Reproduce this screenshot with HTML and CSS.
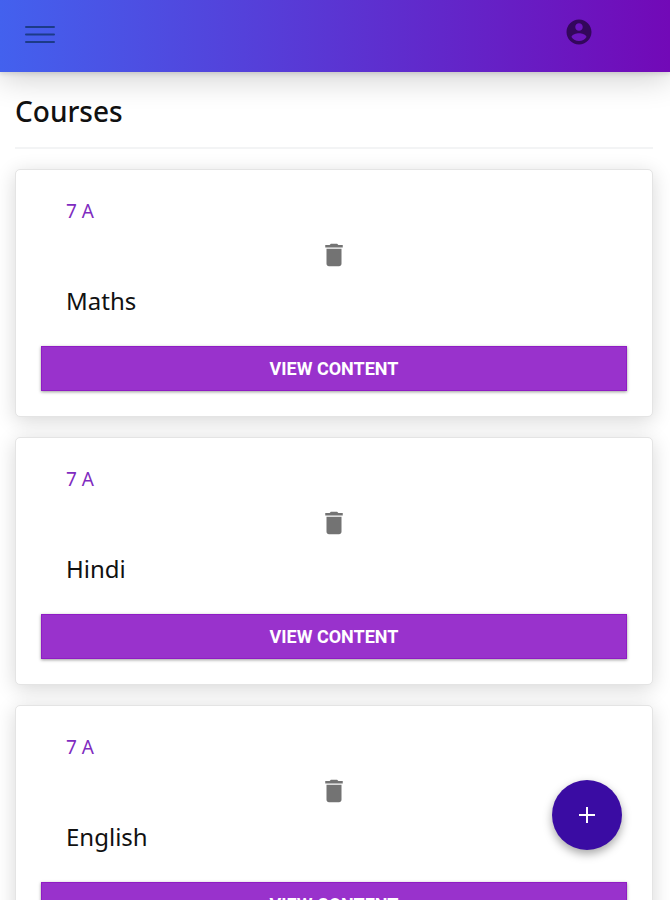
FILE: index.html
```html
<!DOCTYPE html>
<html lang="en">
<head>
  <meta charset="UTF-8" />
  <meta name="viewport" content="width=device-width, initial-scale=1.0"/>
  <title>Courses</title>
  <link rel="stylesheet" href="styles.css">
</head>
<body>
  <header class="topbar">
    <button type="button" class="icon-btn" aria-label="Open menu">
      <svg class="menu-icon" viewBox="0 0 30 18"><path d="M1 2h28M1 9.500h28M1 17h28"/></svg>
    </button>
    <button type="button" class="icon-btn" aria-label="Account">
      <svg class="icon" viewBox="0 0 24 24"><path d="M12 2C6.480 2 2 6.480 2 12s4.480 10 10 10 10-4.480 10-10S17.520 2 12 2zm0 3c1.660 0 3 1.340 3 3s-1.340 3-3 3-3-1.340-3-3 1.340-3 3-3zm0 14.200c-2.500 0-4.710-1.280-6-3.220.030-1.990 4-3.080 6-3.080 1.990 0 5.970 1.090 6 3.080-1.290 1.940-3.500 3.220-6 3.220z"/></svg>
    </button>
  </header>

  <main class="content">
    <h1>Courses</h1>
    <hr>

    <section class="card">
      <div class="card-body">
        <p class="batch">7 A</p>
        <button type="button" class="icon-btn delete" aria-label="Delete Maths">
          <svg class="icon" viewBox="0 0 24 24"><path d="M6 19c0 1.100.900 2 2 2h8c1.100 0 2-.900 2-2V7H6v12zM19 4h-3.500l-1-1h-5l-1 1H5v2h14V4z"/></svg>
        </button>
        <h2>Maths</h2>
      </div>
      <button type="button" class="view-btn">VIEW CONTENT</button>
    </section>

    <section class="card">
      <div class="card-body">
        <p class="batch">7 A</p>
        <button type="button" class="icon-btn delete" aria-label="Delete Hindi">
          <svg class="icon" viewBox="0 0 24 24"><path d="M6 19c0 1.100.900 2 2 2h8c1.100 0 2-.900 2-2V7H6v12zM19 4h-3.500l-1-1h-5l-1 1H5v2h14V4z"/></svg>
        </button>
        <h2>Hindi</h2>
      </div>
      <button type="button" class="view-btn">VIEW CONTENT</button>
    </section>

    <section class="card">
      <div class="card-body">
        <p class="batch">7 A</p>
        <button type="button" class="icon-btn delete" aria-label="Delete English">
          <svg class="icon" viewBox="0 0 24 24"><path d="M6 19c0 1.100.900 2 2 2h8c1.100 0 2-.900 2-2V7H6v12zM19 4h-3.500l-1-1h-5l-1 1H5v2h14V4z"/></svg>
        </button>
        <h2>English</h2>
      </div>
      <button type="button" class="view-btn">VIEW CONTENT</button>
    </section>
  </main>

  <button type="button" class="fab" aria-label="Add course">
    <svg viewBox="0 0 16 16"><path d="M8 0v16M0 8h16"/></svg>
  </button>
</body>
</html>
```

FILE: styles.css
```css
* {
  box-sizing: border-box;
}

body {
  margin: 0;
  background: white;
  color: #111;
  font-family: "Noto Sans", sans-serif;
}

.topbar {
  position: relative;
  display: flex;
  justify-content: space-between;
  align-items: flex-start;
  height: 72px;
  padding: 17px 76px 0 25px;
  background: linear-gradient(to right, #4361ee, #7209b7);
  box-shadow: 0 2px 4px rgba(0,0,0,0.1), 0 6px 32px rgba(0,0,0,0.2);
}

.icon-btn {
  display: block;
  padding: 0;
  background: none;
  border: none;
  cursor: pointer;
}

.icon {
  display: block;
  width: 30px;
  height: 30px;
  fill: currentColor;
}

.topbar .icon-btn {
  color: #33075c;
}

.menu-icon {
  display: block;
  width: 30px;
  height: 18px;
  margin-top: 8px;
  fill: none;
  stroke: #1c3b88;
  stroke-width: 2;
  stroke-linecap: round;
}

.content {
  padding: 20px 17px 20px 15px;
}

h1 {
  margin: 0;
  font-size: 28px;
  font-weight: 500;
  line-height: 38px;
}

hr {
  height: 2px;
  margin: 17px 0 20px;
  background: #f3f4f5;
  border: none;
}

.card {
  margin-bottom: 20px;
  padding: 25px;
  background: white;
  border: 1px solid #e4e4e4;
  border-radius: 5px;
  box-shadow: 0 4px 20px rgba(0,0,0,0.16);
}

.card-body {
  padding: 0 25px 29px;
}

.batch {
  margin: 0;
  color: #7f2cc0;
  font-size: 19px;
  font-weight: 400;
  line-height: 32px;
}

.delete {
  margin: 13px auto 15px;
  color: #737373;
}

h2 {
  margin: 0;
  font-size: 24px;
  font-weight: 400;
  line-height: 32px;
}

.view-btn {
  display: block;
  width: 100%;
  height: 45px;
  background: #9932cc;
  color: white;
  border: 1px solid #8f1cc4;
  font-family: Roboto, sans-serif;
  font-size: 18px;
  font-weight: 700;
  box-shadow: 0 1px 3px rgba(0,0,0,0.4);
  cursor: pointer;
}

.view-btn:hover {
  background: #8427b3;
}

.fab {
  position: fixed;
  right: 48px;
  bottom: 50px;
  display: flex;
  justify-content: center;
  align-items: center;
  width: 70px;
  height: 70px;
  padding: 0;
  background: #3a0ca3;
  border: none;
  border-radius: 50%;
  box-shadow: 0 4px 10px rgba(0,0,0,0.35);
  cursor: pointer;
}

.fab svg {
  width: 16px;
  height: 16px;
  stroke: white;
  stroke-width: 2;
}
```
